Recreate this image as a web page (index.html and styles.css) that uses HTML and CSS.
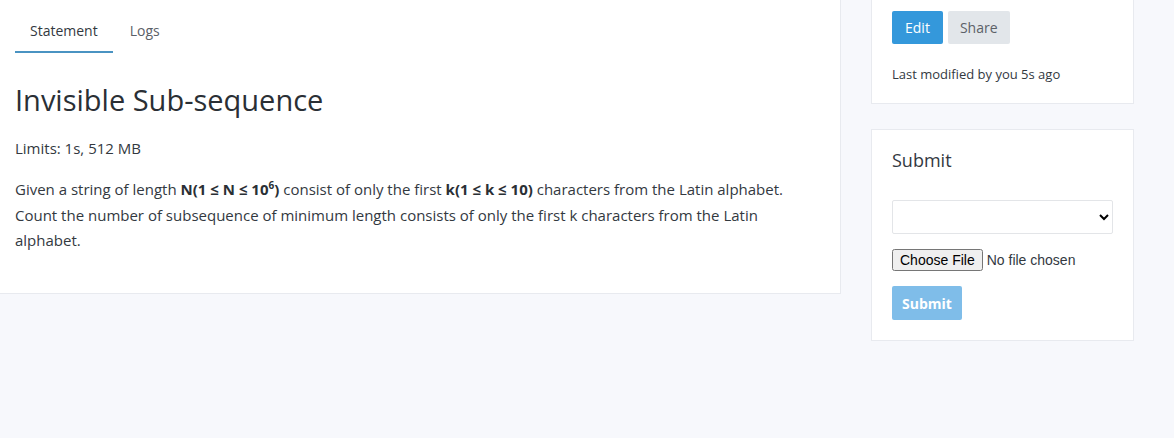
FILE: index.html
```html
<!DOCTYPE html>
<html>
<head>
<meta charset="utf-8">
<link rel="stylesheet" href="styles.css">
</head>
<body>
<div class="layout">
  <main class="card main-card">
    <nav class="tabs">
      <a class="tab active">Statement</a>
      <a class="tab">Logs</a>
    </nav>
    <h1 class="title">Invisible Sub-sequence</h1>
    <p class="limits">Limits: 1s, 512 MB</p>
    <p class="statement">Given a string of length <b>N(1 ≤ N ≤ 10<sup>6</sup>)</b> consist of only the first <b>k(1 ≤ k ≤ 10)</b> characters from the Latin alphabet. Count the number of subsequence of minimum length consists of only the first k characters from the Latin alphabet.</p>
  </main>
  <aside class="side">
    <section class="card side-card">
      <div class="btn-row">
        <button class="btn btn-primary">Edit</button>
        <button class="btn btn-light">Share</button>
      </div>
      <p class="modified">Last modified by you 5s ago</p>
    </section>
    <section class="card side-card">
      <h2 class="side-title">Submit</h2>
      <select class="select"><option></option></select>
      <input class="file" type="file">
      <button class="btn btn-primary btn-disabled" disabled>Submit</button>
    </section>
  </aside>
</div>
</body>
</html>
```

FILE: styles.css
```css
* { box-sizing: border-box; }
html, body { margin: 0; padding: 0; }
body {
  background: #f7f8fc;
  font-family: "Open Sans", "Noto Sans", sans-serif;
  color: #33393f;
  height: 438px;
  overflow: hidden;
}
.layout {
  display: flex;
  align-items: flex-start;
  gap: 30px;
  margin-top: -10px;
  margin-left: -1px;
}
.card {
  background: #fff;
  border: 1px solid #e8eaef;
}
.main-card {
  width: 842px;
  padding: 19px 32px 23px 15px;
}
.tabs {
  display: flex;
  gap: 2px;
}
.tab {
  display: block;
  padding: 11px 15px 10px;
  font-size: 14px;
  line-height: 20px;
  color: #5a6068;
  border-bottom: 2px solid transparent;
}
.tab.active {
  color: #33393f;
  border-bottom-color: #4a93c2;
}
.title {
  font-size: 29px;
  font-weight: 400;
  line-height: 36px;
  margin: 29px 0 19px;
  color: #2a2f35;
}
.limits {
  font-size: 15px;
  line-height: 22px;
  margin: 0 0 18px;
}
.statement {
  font-size: 15px;
  line-height: 25.6px;
  margin: 0 0 16px;
}
.statement b { font-weight: 700; color: #2a2f35; }
.statement sup { font-size: 10px; line-height: 0; }
.side {
  display: flex;
  flex-direction: column;
  gap: 25px;
  width: 263px;
}
.side-card {
  padding: 20px;
}
.btn-row {
  display: flex;
  gap: 5px;
}
.btn {
  font-family: inherit;
  font-size: 14px;
  height: 33px;
  padding: 0 13px;
  border: none;
  border-radius: 2px;
}
.btn-primary { background: #3498db; color: #fff; }
.btn-light { background: #e2e6ea; color: #5c6167; padding: 0 12px; }
.btn-disabled { background: #7fbde9; font-weight: 700; padding: 0 10px; height: 34px; }
.modified {
  font-size: 13px;
  margin: 21px 0 0;
  line-height: 18px;
}
.side-title {
  font-size: 18px;
  font-weight: 400;
  margin: -2px 0 28px;
  line-height: 24px;
}
.select {
  display: block;
  width: 221px;
  height: 34px;
  border: 1px solid #e3e5e8;
  border-radius: 2px;
  background: #fff;
  margin-bottom: 15px;
}
.file {
  display: block;
  font-size: 14px;
  margin-bottom: 15px;
  font-family: "Liberation Sans", Arial, sans-serif;
}
```
